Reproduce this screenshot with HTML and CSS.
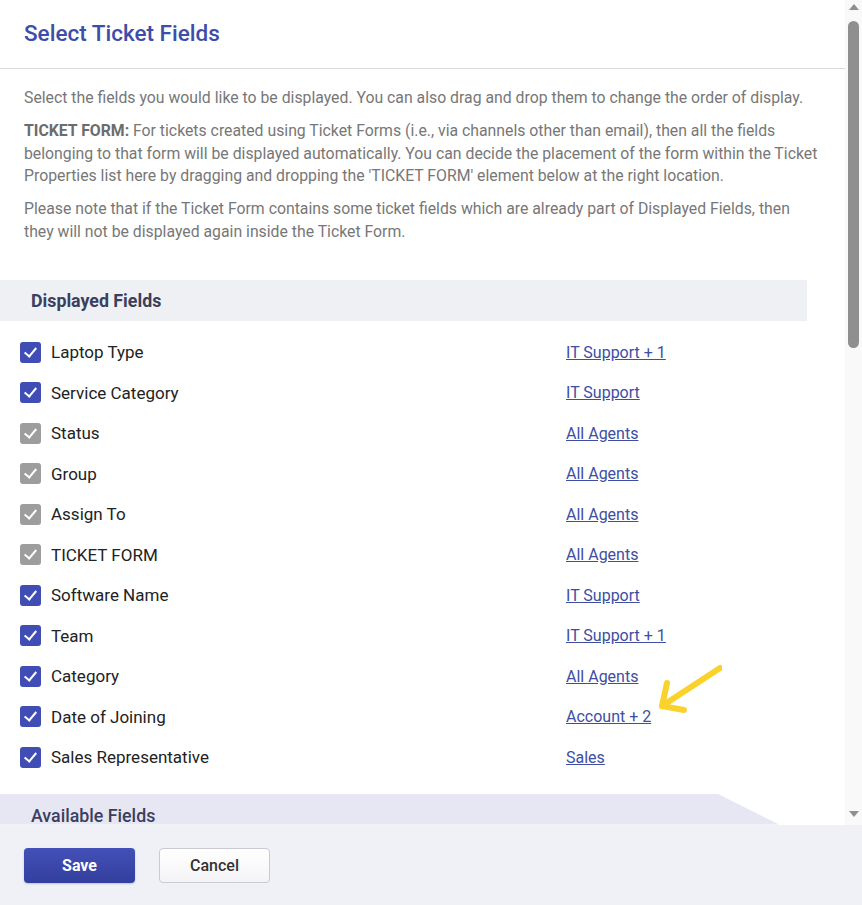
FILE: index.html
```html
<!DOCTYPE html>
<html lang="en">
<head>
    <meta charset="UTF-8">
    <meta name="viewport" content="width=device-width, initial-scale=1.0">
    <title>Select Ticket Fields</title>
    <link rel="stylesheet" href="styles.css">
</head>
<body>
    <div class="modal">
        <div class="modal-body">
            <div class="content">
                <div class="header">
                    <h1>Select Ticket Fields</h1>
                </div>
                <div class="intro">
                    <p>Select the fields you would like to be displayed. You can also drag and drop them to change the order of display.</p>
                    <p><b>TICKET FORM:</b> For tickets created using Ticket Forms (i.e., via channels other than email), then all the fields belonging to that form will be displayed automatically. You can decide the placement of the form within the Ticket Properties list here by dragging and dropping the 'TICKET FORM' element below at the right location.</p>
                    <p>Please note that if the Ticket Form contains some ticket fields which are already part of Displayed Fields, then they will not be displayed again inside the Ticket Form.</p>
                </div>

                <div class="section-title">Displayed Fields</div>
                <ul class="field-list">
                    <li><span class="check"></span><span class="name">Laptop Type</span><a href="#">IT Support + 1</a></li>
                    <li><span class="check"></span><span class="name">Service Category</span><a href="#">IT Support</a></li>
                    <li><span class="check locked"></span><span class="name">Status</span><a href="#">All Agents</a></li>
                    <li><span class="check locked"></span><span class="name">Group</span><a href="#">All Agents</a></li>
                    <li><span class="check locked"></span><span class="name">Assign To</span><a href="#">All Agents</a></li>
                    <li><span class="check locked"></span><span class="name">TICKET FORM</span><a href="#">All Agents</a></li>
                    <li><span class="check"></span><span class="name">Software Name</span><a href="#">IT Support</a></li>
                    <li><span class="check"></span><span class="name">Team</span><a href="#">IT Support + 1</a></li>
                    <li><span class="check"></span><span class="name">Category</span><a href="#">All Agents</a></li>
                    <li><span class="check"></span><span class="name">Date of Joining</span><a href="#">Account + 2</a></li>
                    <li><span class="check"></span><span class="name">Sales Representative</span><a href="#">Sales</a></li>
                </ul>

                <div class="section-title available">Available Fields</div>

                <svg class="pointer" width="80" height="60" viewBox="0 0 80 60">
                    <g fill="none" stroke="#fbd22c" stroke-width="6" stroke-linecap="round" stroke-linejoin="round">
                        <path d="M78 10 L20 48"/>
                        <path d="M25 25 L20 48 L42 52"/>
                    </g>
                </svg>
            </div>
            <div class="scrollbar">
                <span class="arrow up"></span>
                <div class="thumb"></div>
                <span class="arrow down"></span>
            </div>
        </div>
        <div class="footer">
            <button class="btn primary">Save</button>
            <button class="btn">Cancel</button>
        </div>
    </div>
</body>
</html>
```

FILE: styles.css
```css
body {
    margin: 0;
    font-family: Roboto, "Liberation Sans", sans-serif;
    background: #fff;
}

.modal {
    width: 862px;
    height: 905px;
    display: flex;
    flex-direction: column;
}

.modal-body {
    display: flex;
    height: 825px;
    overflow: hidden;
}

.content {
    flex: 1;
    position: relative;
    overflow: hidden;
}

.header {
    height: 68px;
    display: flex;
    align-items: center;
    padding-left: 24px;
    border-bottom: 1px solid #d9d9d9;
}

.header h1 {
    margin: 0 0 2px 0;
    font-size: 22.5px;
    font-weight: 500;
    color: #3d4ea8;
}

.intro {
    padding: 18px 24px 0 24px;
    color: #777;
    font-size: 15.8px;
    line-height: 22.5px;
}

.intro p {
    margin: 0 0 10.5px 0;
}

.intro b {
    font-weight: 700;
    color: #6c6c6c;
}

.section-title {
    margin-top: 37px;
    width: 807px;
    height: 41px;
    box-sizing: border-box;
    padding-left: 31px;
    display: flex;
    align-items: center;
    background: #eff0f4;
    font-size: 17.8px;
    font-weight: 700;
    color: #3b3f5e;
}

.section-title.available {
    margin-top: 16px;
    width: 779px;
    height: 44px;
    align-items: flex-start;
    padding-top: 11px;
    background: #e6e7f3;
    font-weight: 500;
    clip-path: polygon(0 0, 717px 0, 100% 31px, 0 31px);
}

.field-list {
    list-style: none;
    margin: 11px 0 0 0;
    padding: 0;
}

.field-list li {
    height: 40.5px;
    display: flex;
    align-items: center;
    padding-left: 20px;
}

.check {
    width: 21px;
    height: 21px;
    border-radius: 3px;
    background: #3f4db4;
    position: relative;
    flex-shrink: 0;
}

.check::after {
    content: "";
    position: absolute;
    left: 7px;
    top: 3px;
    width: 5px;
    height: 10px;
    border: solid #fff;
    border-width: 0 2px 2px 0;
    transform: rotate(40deg);
}

.check.locked {
    background: #9d9d9d;
}

.name {
    width: 515px;
    padding-left: 10px;
    font-size: 17px;
    color: #222;
}

.field-list a {
    font-size: 16px;
    color: #3d4ea3;
    text-decoration: underline;
}

.pointer {
    position: absolute;
    left: 642px;
    top: 658px;
}

.scrollbar {
    width: 17px;
    background: #f9f9f9;
    position: relative;
}

.thumb {
    position: absolute;
    left: 3px;
    top: 21px;
    width: 11px;
    height: 327px;
    border-radius: 6px;
    background: #8f8f8f;
}

.arrow {
    position: absolute;
    left: 4px;
    width: 0;
    height: 0;
    border-left: 5px solid transparent;
    border-right: 5px solid transparent;
}

.arrow.up {
    top: 4px;
    border-bottom: 6px solid #8f8f8f;
}

.arrow.down {
    top: 811px;
    border-top: 6px solid #8f8f8f;
}

.footer {
    flex: 1;
    background: #f0f1f7;
    display: flex;
    align-items: flex-start;
    gap: 24px;
    padding: 23px 0 0 24px;
}

.btn {
    width: 111px;
    height: 35px;
    border-radius: 4px;
    font-family: Roboto, "Liberation Sans", sans-serif;
    font-size: 16px;
    font-weight: 500;
    color: #333;
    background: linear-gradient(#fff, #f4f4f7);
    border: 1px solid #c9cad3;
    cursor: pointer;
}

.btn.primary {
    color: #fff;
    font-weight: 700;
    border: none;
    background: linear-gradient(#4350b8, #333f9c);
    box-shadow: 0 1px 2px rgba(0, 0, 0, 0.2);
}
```
